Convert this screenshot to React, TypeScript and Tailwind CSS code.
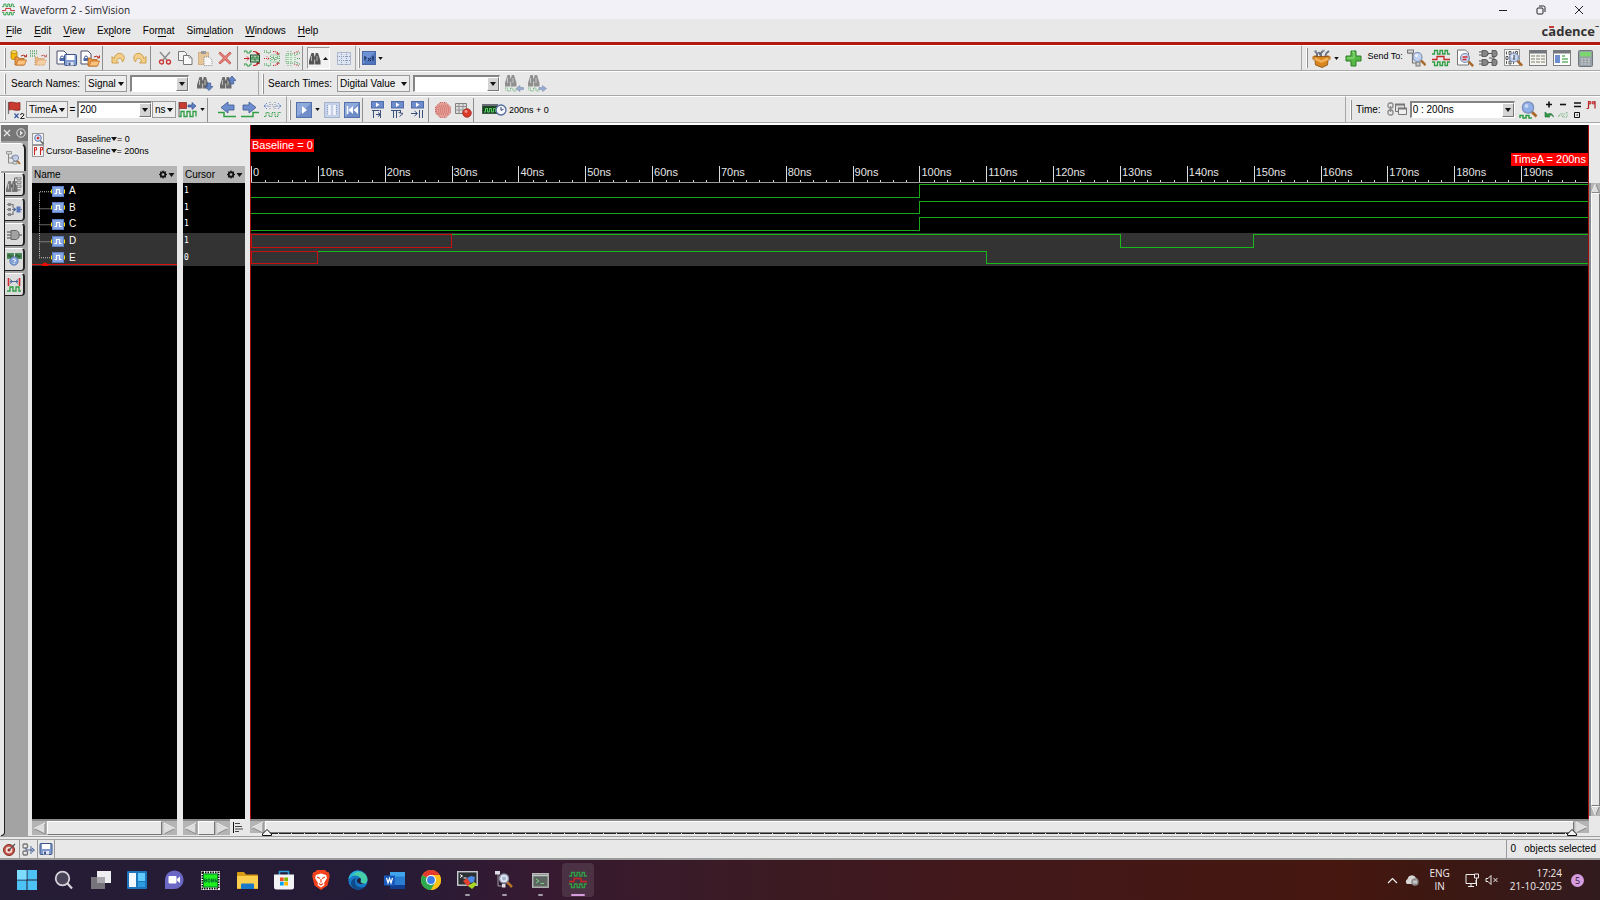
import React from "react";

type P = { children?: React.ReactNode };

/* ---------- drawing helpers ---------- */

function Svg({ w, h, children, className = "" }: { w: number; h: number; children?: React.ReactNode; className?: string }) {
  return (
    <svg width={w} height={h} viewBox={`0 0 ${w} ${h}`} fill="none" aria-hidden="true" className={"block shrink-0 " + className}>
      {children}
    </svg>
  );
}

const Caret = ({ className = "" }: { className?: string }) => (
  <Svg w={6} h={4} className={className}>
    <path d="M0 0h6L3 4z" fill="#111" />
  </Svg>
);

const Waves = ({ w = 18, h = 18 }: { w?: number; h?: number }) => (
  <svg width={w} height={h} viewBox="0 0 18 18" fill="none" strokeWidth="1.3" aria-hidden="true" className="block">
    <path d="M0 5h2.500V1.500h3V5H8V1.500h2.500V5h2.500V1.500h2.500V5H18" stroke="#2f9e44" />
    <path d="M0 10.500h5V7.500h7v3h6" stroke="#c62828" />
    <path d="M0 13h2.500v3.500h3V13H8v3.500h2.500V13h2.500v3.500h2.500V13H18" stroke="#2f9e44" />
  </svg>
);

const Folder = ({ x = 0, y = 0, dash = false }: { x?: number; y?: number; dash?: boolean }) => (
  <g transform={`translate(${x} ${y})`} opacity={dash ? 0.65 : 1}>
    <path d="M0 10V2h3l1 1.500h5V10z" fill="#e79a4b" stroke="#b5651d" strokeWidth=".8" strokeDasharray={dash ? "1 1" : undefined} />
    <path d="M1 10l2-5h8.500L9.500 10z" fill="#fbc37e" stroke="#c26a20" strokeWidth=".8" strokeDasharray={dash ? "1 1" : undefined} />
    <path d="M6 1q3-2 5 .5M11.500-.5v2.300H9" stroke="#b52a1c" strokeWidth="1" />
  </g>
);

const OpenDb = () => (
  <Svg w={18} h={18}>
    <path d="M1 3v6c0 2 6 2 6 0V3" fill="#f2b90f" stroke="#a87d00" strokeWidth=".7" />
    <ellipse cx="4" cy="3" rx="3" ry="1.400" fill="#ffe36b" stroke="#a87d00" strokeWidth=".7" />
    <Folder x={5} y={6} />
  </Svg>
);
const OpenSrc = () => (
  <Svg w={18} h={18}>
    <path d="M0 2h8M0 4.500h8M0 7h5" stroke="#58a566" strokeWidth="1.500" strokeDasharray="1 1" />
    <Folder x={5} y={6} dash />
  </Svg>
);
const Page = ({ x = 0, y = 0 }: { x?: number; y?: number }) => (
  <g transform={`translate(${x} ${y})`}>
    <path d="M0 0h7l3 3v10H0z" fill="#fff" stroke="#4a5068" strokeWidth="1" />
    <path d="M3.500 9V6.500a1.500 1.500 0 013 0V9" stroke="#3a559a" />
    <rect x="2.500" y="7" width="5" height="3" fill="#4a69ad" />
  </g>
);
const Disk = ({ x = 0, y = 0, s = 1 }: { x?: number; y?: number; s?: number }) => (
  <g transform={`translate(${x} ${y}) scale(${s})`}>
    <rect x=".5" y=".5" width="12" height="11" rx="1" fill="#7f9bcd" stroke="#3c5488" />
    <rect x="2.500" y="1" width="8" height="5" fill="#fff" />
    <rect x="3.500" y="8" width="6" height="3.500" fill="#dfe4ee" />
    <rect x="4.500" y="8.500" width="2" height="3" fill="#43598f" />
  </g>
);
const SaveScript = () => (
  <Svg w={21} h={17}>
    <Page x={1} y={1} />
    <Disk x={8} y={4} />
  </Svg>
);
const OpenScript = () => (
  <Svg w={20} h={17}>
    <Page x={1} y={1} />
    <Folder x={8} y={6} />
  </Svg>
);
const Undo = ({ flip = false }: { flip?: boolean }) => (
  <Svg w={16} h={14} className={flip ? "-scale-x-100" : ""}>
    <path d="M1 5.500V12h6.500L5.500 10C7 6.500 10.500 6 11.500 11c4-5 .5-9.500-4.500-8.500Q4 3.500 3 7.500z" fill="#f3cf8b" stroke="#c99a3e" strokeWidth=".9" />
  </Svg>
);
const Cut = () => (
  <Svg w={14} h={14}>
    <path d="M2 1l7 8M12 1L5 9" stroke="#8d8d8d" strokeWidth="1.500" />
    <circle cx="3.500" cy="11" r="2" stroke="#c33" strokeWidth="1.300" />
    <circle cx="10.500" cy="11" r="2" stroke="#c33" strokeWidth="1.300" />
  </Svg>
);
const Copy = () => (
  <Svg w={15} h={14}>
    <path d="M.5.5h6l2 2v7h-8z" fill="#f4f4f4" stroke="#777" />
    <path d="M5.500 4.500h6l2.500 2.500v6.500H5.500z" fill="#fbfbfb" stroke="#777" />
    <path d="M11 4.500V7h3" stroke="#999" />
  </Svg>
);
const Paste = () => (
  <Svg w={15} h={15}>
    <rect x=".5" y="1.500" width="10" height="12" fill="#e6c699" stroke="#b98a4d" strokeDasharray="1 1" />
    <path d="M3 0h5v3H3z" fill="#9a9a9a" />
    <path d="M6 6h5l3 3v5.500H6z" fill="#f6f6f6" stroke="#8c8c8c" strokeDasharray="1 1" />
  </Svg>
);
const Del = () => (
  <Svg w={14} h={14}>
    <path d="M2 1l5 4.500L12 1l1 1.500L8.500 7l4.500 5-1.500 1L7 8.700 2 13l-1-1.500L5.500 7 1 2.500z" fill="#e88179" stroke="#c04a42" strokeWidth=".8" />
  </Svg>
);
const WaveBox = ({ kind }: { kind: number }) => (
  <Svg w={17} h={17}>
    {kind < 2 ? (
      <g>
        <path d="M0 3V1h3v2h3V1h2M0 16v-2h3v2h3v-2h2" stroke="#2f9e44" strokeDasharray={kind ? "1 1" : undefined} />
        <path d="M9 1.500q5 0 5 3M9 15.500q5 0 5-3" stroke="#c62828" strokeWidth="1.200" strokeDasharray={kind ? "1 1" : undefined} />
        <path d="M12 3h4l-2 3zM12 14h4l-2-3z" fill="#b12020" opacity={kind ? 0.6 : 1} />
        <rect x="6.500" y="5" width="9" height="7" fill={kind ? "#dff0e0" : "#a9cfae"} stroke={kind ? "#6aa978" : "#1d4d2a"} strokeDasharray={kind ? "1 1" : undefined} />
        <path d="M8 10V7h2v3h2V7h2v3" stroke="#2f7a3e" strokeDasharray={kind ? "1 1" : undefined} />
        <path d="M0 8.500h5M3 6.500l2 2-2 2" stroke="#c62828" strokeDasharray={kind ? "1 1" : undefined} />
      </g>
    ) : (
      <g>
        <path d="M2 4h9v9H2z" fill="#dff0e0" stroke="#6aa978" strokeDasharray="1 1" />
        <path d="M4 1v15M7 1v15" stroke="#6aa978" strokeDasharray="1 1" />
        <path d="M10 3l5-2M10 14l5 2" stroke="#c62828" strokeDasharray="1 1" />
        <path d="M13 5V3h3M13 8.500h4M13 12v2h3" stroke="#2f9e44" strokeDasharray="1 1" />
      </g>
    )}
  </Svg>
);
const Bino = ({ x = 0, y = 0, c = "#555" }: { x?: number; y?: number; c?: string }) => (
  <g transform={`translate(${x} ${y})`}>
    <path d="M2.500 0h2.300l.6 3v8.500H0V8z" fill={c} />
    <path d="M9 0H6.700l-.6 3v8.500h5.400V8z" fill={c} />
    <path d="M5 3.500h1.500v3H5z" fill="#222" opacity=".6" />
    <path d="M2.500 3v5M8 3v5" stroke="#ddd" opacity=".7" />
  </g>
);
const BinoIcon = () => (
  <Svg w={12} h={13}>
    <Bino y={1} />
  </Svg>
);
const BinoArrow = ({ up = false }: { up?: boolean }) => (
  <Svg w={16} h={15}>
    <Bino y={1} c="#6b6b6b" />
    {up ? (
      <path d="M12 0l4 4.500h-2.300V8h-3.400V4.500H8z" fill="#6484c4" stroke="#3b568f" strokeWidth=".7" />
    ) : (
      <path d="M12 14.500l4-4h-2.300V7h-3.400v3.500H8z" fill="#6484c4" stroke="#3b568f" strokeWidth=".7" />
    )}
  </Svg>
);
const BinoWave = ({ left = false }: { left?: boolean }) => (
  <Svg w={19} h={17}>
    <g opacity=".6">
      <Bino />
      <path d="M0 16v-3h2.500v3h3v-3h2.500v3h3v-3" stroke="#2f9e44" strokeDasharray="1 .5" />
      <path d={left ? "M11 13.500l4-3v2h3.500v2H15v2z" : "M18.500 13.500l-4-3v2H11v2h3.500v2z"} fill="#6484c4" stroke="#3b568f" strokeWidth=".6" />
    </g>
  </Svg>
);
const Select = () => (
  <Svg w={16} h={15}>
    <rect x="1.500" y="1.500" width="13" height="12" fill="#dde4f2" stroke="#7d8cb3" strokeDasharray="1 1" />
    <path d="M1 5.500h14M1 9.500h14M5.500 1v13M10.500 1v13" stroke="#8b98b8" strokeDasharray="1 1" />
  </Svg>
);
const TxtBtn = () => (
  <Svg w={14} h={14}>
    <rect x=".5" y=".5" width="13" height="13" fill="#6d92d6" stroke="#4b68a5" />
    <path d="M1 13L13 1v12z" fill="#4f76bf" />
    <path d="M3 10V5M2 7h3M6 7l3 3M9 7l-3 3M11 10V5M10 7h2" stroke="#16264f" />
  </Svg>
);
const FlagX = () => (
  <Svg w={18} h={18}>
    <path d="M1.500 1v12" stroke="#777" strokeWidth="1.300" />
    <path d="M2 1.500c4-1.500 6 1.500 11 0v7.500c-5 1.500-7-1.500-11 0z" fill="#c93a30" stroke="#80201a" strokeWidth=".7" />
    <path d="M7.500 12.500l4 4.500M11.500 12.500l-4 4.500" stroke="#3b5aa0" strokeWidth="1.200" />
    <path d="M13.500 14q0-1.500 1.700-1.500T17 14L13.500 17.500H17.500" stroke="#111" strokeWidth=".9" />
  </Svg>
);
const FlagWave = () => (
  <Svg w={20} h={17}>
    <path d="M1 1v15" stroke="#666" />
    <path d="M1.500 1.500h7v6h-7z" fill="#c93a30" stroke="#80201a" strokeWidth=".7" />
    <path d="M10 4h4V1.500l4 3.500-4 3.500V6h-4z" fill="#5b7fc2" stroke="#344f8c" strokeWidth=".7" />
    <path d="M1 15.500h2v-5h3v5h3v-5h3v5h3v-5h3v5" stroke="#2f9e44" strokeWidth="1.300" />
  </Svg>
);
const EdgeArrow = ({ left = false }: { left?: boolean }) => (
  <Svg w={19} h={17} className={left ? "-scale-x-100" : ""}>
    <path d="M2 4h6V1l7 5.500L8 12V9H2z" fill="#6d8fd0" stroke="#3b568f" strokeWidth=".8" />
    <path d="M0 15.500h12v-4h6" stroke="#2f9e44" strokeWidth="1.500" />
  </Svg>
);
const WaveEdit = () => (
  <Svg w={19} h={17}>
    <path d="M1 5h5M13 5h5M1 5l3-3M1 5l3 3M18 5l-3-3M18 5l-3 3" stroke="#6d8fd0" strokeDasharray="2 .7" />
    <path d="M7 1v8M12 1v8M9 3l2 4" stroke="#7b869e" strokeDasharray="1 1" />
    <path d="M1 15.500h2v-4h3v4h3v-4h3v4h3v-4h3" stroke="#2f9e44" strokeDasharray="1.500 .7" />
  </Svg>
);
const Play = () => (
  <Svg w={16} h={16}>
    <rect x=".5" y=".5" width="15" height="15" fill="#8ea9dc" stroke="#5470ab" />
    <path d="M1 15L15 1v14z" fill="#6f8dc8" />
    <path d="M6 4l5 4-5 4z" fill="#fff" />
  </Svg>
);
const Pause = () => (
  <Svg w={16} h={16}>
    <rect x=".5" y=".5" width="15" height="15" fill="#c6d1e8" stroke="#7088b8" strokeDasharray="1 1" />
    <path d="M5.500 3v10M10.500 3v10" stroke="#f4f6fb" strokeWidth="2.500" />
    <path d="M3.500 3v10M12.500 3v10" stroke="#8fa3cc" strokeDasharray="1 1" />
  </Svg>
);
const Rewind = () => (
  <Svg w={16} h={16}>
    <rect x=".5" y=".5" width="15" height="15" fill="#8ea9dc" stroke="#5470ab" />
    <path d="M1 15L15 1v14z" fill="#6f8dc8" />
    <path d="M3.500 4v8" stroke="#fff" strokeWidth="1.500" />
    <path d="M9 4v8L4.500 8zM14 4v8L9.500 8z" fill="#fff" />
  </Svg>
);
const Step = ({ kind }: { kind: number }) => (
  <Svg w={15} h={17}>
    <rect x="1.500" y=".5" width="12" height="6.500" fill="#6d8ccb" stroke="#4f6ba8" />
    <path d="M6 1.500l3.500 2.200L6 6z" fill="#fff" />
    {kind === 0 && <path d="M2 9.500h7.500M3.500 9.500V17M10.500 9v8M6 13.500h4M8 11.500l2.500 2-2.500 2" stroke="#3c507c" />}
    {kind === 1 && <path d="M1 9.500h9.500M3.500 9.500V17M6.500 9.500V17M10.500 9v3M8.500 11.500l4.500 1-3.500 3" stroke="#3c507c" />}
    {kind === 2 && <path d="M1 12.500h6M4.500 10l3 2.500-3 2.500M9.500 9v8M12.500 9v8" stroke="#3c507c" />}
  </Svg>
);
const Stop = () => (
  <Svg w={16} h={16}>
    <path d="M5 .5h6L15.500 5v6L11 15.500H5L.5 11V5z" fill="#e39b95" stroke="#c4605a" strokeDasharray="1 1" />
    <path d="M2 4h12M1 6h14M1 8h14M1 10h14M2 12h12" stroke="#cc6a63" strokeDasharray="1 1" />
  </Svg>
);
const BreakTable = () => (
  <Svg w={17} h={16}>
    <path d="M.5 1.500h11v10H.5z" fill="#dcdcdc" stroke="#808080" />
    <path d="M.5 4.500h11M.5 8h11M4 1.500v10M8 1.500v10" stroke="#909090" />
    <circle cx="12" cy="11" r="4.300" fill="#d93a2c" stroke="#9a2118" strokeWidth=".7" />
    <circle cx="11" cy="9.500" r="1.400" fill="#f29a8f" />
  </Svg>
);
const SimClock = () => (
  <Svg w={25} h={14}>
    <rect x=".5" y="1.500" width="15" height="9" fill="#1e4426" stroke="#3e5a45" />
    <path d="M0 2h16" stroke="#6a6f7a" strokeWidth="2" />
    <path d="M2 9h1.500V5.500h2V9h2V5.500h2V9h2V5.500h2V9" stroke="#56d65f" />
    <circle cx="19" cy="7" r="5" fill="#f4f6fb" stroke="#526a9e" strokeWidth="1.300" />
    <path d="M19 4v3.300l2.500-1" stroke="#2b3c66" />
  </Svg>
);
const Toolbox = () => (
  <Svg w={20} h={19}>
    <path d="M5 8V4.500L3 2M9 8V4l2.500-2.500M13 8l1.500-4L17 2M6.500 3l2 3" stroke="#6b7480" strokeWidth="2" />
    <path d="M2 3q1-2 3-1M10 1.500h3" stroke="#9aa3ad" strokeWidth="1.300" />
    <path d="M1 7l3-1v3L1 11.500l-1-3zM18 7l-3-1v3l3 2.500 1-3z" fill="#c98a3e" />
    <path d="M2.500 7.500h14l-1 8.500L10 18.500 3.500 16z" fill="#d8851f" stroke="#8a4d0a" strokeWidth=".8" />
    <path d="M2.500 8l7 3 7-3v3l-7 3-7-3z" fill="#f2ae56" />
  </Svg>
);
const Plus = () => (
  <Svg w={17} h={17}>
    <path d="M6 1h5v5h5v5h-5v5H6v-5H1V6h5z" fill="#56b947" stroke="#2a7d24" />
    <path d="M7 2h2v6H2" stroke="#98e08a" />
  </Svg>
);
const Mag = ({ x = 0, y = 0, r = 4.5 }: { x?: number; y?: number; r?: number }) => (
  <g transform={`translate(${x} ${y})`}>
    <path d={`M${r * 0.7} ${r * 0.7}l5 5`} stroke="#a8692a" strokeWidth="2.600" />
    <circle cx="0" cy="0" r={r} fill="#b9cdf0" fillOpacity=".85" stroke="#8291b3" strokeWidth="1.200" />
    <circle cx={-r * 0.25} cy={-r * 0.3} r={r * 0.35} fill="#fff" opacity=".7" />
  </g>
);
const Browser = () => (
  <Svg w={19} h={19}>
    <path d="M1.500 1v3h4v10h5M5.500 8h4" stroke="#777" strokeWidth="1.200" />
    <rect x=".5" y="1" width="6" height="3" fill="#d8d8d8" stroke="#777" />
    <rect x="9" y="13" width="4" height="4" fill="#ccc" stroke="#777" />
    <Mag x={10.500} y={8} />
  </Svg>
);
const TabBrowser = () => (
  <Svg w={15} h={14}>
    <path d="M2.500 3v9h6M2.500 7h4" stroke="#888" />
    <path d="M.5.500h5V3h-5zM6 5h4v2.500H6zM7 10.500h4V13H7z" fill="#dcdcdc" stroke="#888" strokeWidth=".8" />
    <path d="M11 9.500l3 3.500" stroke="#a8692a" strokeWidth="1.800" />
    <circle cx="9.500" cy="7" r="3" fill="#c5d3ec" fillOpacity=".8" stroke="#7d8bad" />
  </Svg>
);
const SrcBrowser = () => (
  <Svg w={19} h={19}>
    <path d="M1.500 1h8l3 3v12h-11z" fill="#fbfbfb" stroke="#777" />
    <Mag x={9} y={9} />
    <path d="M6.500 8h5M6.500 10.500h4" stroke="#d22a2a" strokeWidth="1.500" />
  </Svg>
);
const Schematic = () => (
  <Svg w={20} h={18}>
    <path d="M0 3h6M0 6h6M0 12h6M0 15h6M8 4.500h6M15 5v8M8 13.500h6M10 9h5" stroke="#555" />
    <path d="M3 1.500h4l2 1.500v3L7 7.500H3zM13 1.500h4l1 1.500v3l-1 1.500h-4zM3 10.500h4l2 1.500v3l-2 1.500H3zM13 10.500h4l1 1.500v3l-1 1.500h-4z" fill="#868686" stroke="#4d4d4d" strokeWidth=".8" />
  </Svg>
);
const MemView = () => (
  <Svg w={20} h={19}>
    <rect x=".5" y=".5" width="15" height="16" fill="#f6f6f6" stroke="#999" />
    <path d="M2.500 2.500v3M5 2.500h2v3H5zM9.500 2.500v3M11.500 2.500h2v3h-2zM2 7.500h2v3H2zM6.500 7.500v3M2.500 12v3M5 12h2v3H5zM9.500 12v3" stroke="#333" strokeWidth=".8" />
    <Mag x={10} y={8.500} r={4.500} />
    <path d="M10 6v5" stroke="#333" />
  </Svg>
);
const TableIcon = () => (
  <Svg w={18} h={16}>
    <rect x=".5" y=".5" width="17" height="15" fill="#f3f3f0" stroke="#7d7d7d" />
    <path d="M1 2h16" stroke="#73767c" strokeWidth="3" />
    <path d="M2 6h4M7 6h4M12 6h4M2 9h4M7 9h4M12 9h4M2 12h4M7 12h4M12 12h4" stroke="#a5a595" strokeWidth="1.500" />
  </Svg>
);
const PropsIcon = () => (
  <Svg w={18} h={16}>
    <rect x=".5" y=".5" width="17" height="15" fill="#fff" stroke="#7d7d7d" />
    <path d="M1 2h16" stroke="#73767c" strokeWidth="3" />
    <rect x="2" y="5" width="5" height="8" fill="#6d8fd0" />
    <path d="M9 6h3M9 9h6M9 12h6" stroke="#68b36a" strokeWidth="1.600" />
  </Svg>
);
const Calc = () => (
  <Svg w={15} h={17}>
    <rect x=".5" y=".5" width="14" height="16" rx="1" fill="#97a0a6" stroke="#6f777d" />
    <rect x="2" y="2" width="11" height="4.500" fill="#7bd66e" />
    <path d="M3 9h9M3 11.500h9M3 14h9" stroke="#c2c8cc" strokeWidth="1.400" strokeDasharray="2.200 1.200" />
  </Svg>
);
const LinkWin = () => (
  <Svg w={20} h={15}>
    <rect x="1" y="1" width="5" height="5" rx="2" stroke="#888" strokeWidth="1.300" />
    <rect x="1" y="8" width="5" height="5" rx="2" stroke="#888" strokeWidth="1.300" />
    <path d="M3.500 4v6" stroke="#888" strokeWidth="1.300" />
    <path d="M8.500 2.500h9v7h-9z" fill="#ddd" stroke="#777" />
    <path d="M8 2.500h10" stroke="#777" strokeWidth="2" />
    <path d="M11.500 6.500h8v6h-8z" fill="#eee" stroke="#777" />
    <path d="M11 6.500h9" stroke="#777" strokeWidth="2" />
  </Svg>
);
const ZoomWave = () => (
  <Svg w={19} h={18}>
    <path d="M1 17v-2.500h3V17h3v-2.500h3V17h3" stroke="#2f9e44" strokeWidth="1.500" />
    <path d="M12.500 10.500l5 5" stroke="#a8692a" strokeWidth="2.800" />
    <circle cx="9" cy="6.500" r="5.700" fill="#8fafe8" stroke="#7d8fb8" strokeWidth="1.200" />
    <circle cx="7.500" cy="5" r="2" fill="#fff" opacity=".5" />
  </Svg>
);
const Cursors = () => (
  <Svg w={10} h={9}>
    <path d="M2.500 8.500V1M9 8.500V1" stroke="#b32020" strokeWidth="1.200" />
    <path d="M2.500 1.500h2.500V4H2.500zM8.500 1.500h-2V4h2z" fill="#e26a6a" stroke="#b32020" strokeWidth=".7" />
    <path d="M.5 8.500h2" stroke="#b32020" />
  </Svg>
);
const Gear = () => (
  <Svg w={16} h={9}>
    <circle cx="4" cy="4.500" r="2.400" stroke="#111" strokeWidth="1.700" />
    <path d="M4 .5v8M0 4.500h8M1.200 1.700l5.600 5.600M6.800 1.700L1.200 7.300" stroke="#111" strokeWidth="1.100" />
    <circle cx="4" cy="4.500" r="1.300" fill="#b5b5b5" />
    <path d="M9.500 3h6l-3 4z" fill="#111" />
  </Svg>
);
const SigIcon = () => (
  <Svg w={14} h={11}>
    <path d="M0 3.500h3v4H0zM11 3.500h3v4h-3z" fill="#ffe100" />
    <rect x="1.500" y=".5" width="11" height="10" fill="#86a6e4" stroke="#5f7fc4" />
    <path d="M3.500 7.500h2v-4h3v4h2" stroke="#fff" strokeWidth="1.200" />
  </Svg>
);

/* ---------- controls ---------- */

const Sep = () => <span className="h-6 w-px shrink-0 border-l border-[#8f8f8f] bg-white" />;
const Handle = () => <span className="h-5 w-0.5 shrink-0 border-r border-[#8f8f8f] bg-white" />;

const Btn = ({ label, children, wide = false }: P & { label: string; wide?: boolean }) => (
  <button aria-label={label} className={"flex h-5 shrink-0 items-center justify-center " + (wide ? "w-6" : "w-5")}>
    {children}
  </button>
);

const Drop = ({ label, value, className }: { label: string; value: string; className: string }) => (
  <span className={"relative flex h-[17px] shrink-0 items-center border border-[#9a9a9a] bg-[#ededed] " + className}>
    <select aria-label={label} defaultValue={value} className="h-full w-full appearance-none bg-transparent pl-0.5 text-[10px] leading-4 outline-none">
      <option>{value}</option>
    </select>
    <Caret className="pointer-events-none absolute right-0.5" />
  </span>
);

const Combo = ({ label, value = "", className }: { label: string; value?: string; className: string }) => (
  <span className={"flex h-[17px] shrink-0 border border-t-2 border-l-2 border-[#858585] border-r-white border-b-white bg-white " + className}>
    <input aria-label={label} defaultValue={value} className="w-0 min-w-0 flex-1 bg-transparent pl-px text-[10px] leading-[14px] outline-none" />
    <button aria-label={`${label} list`} className="flex w-3 items-center justify-center border border-t-white border-r-[#777] border-b-[#777] border-l-white bg-[#d4d4d4]">
      <Caret />
    </button>
  </span>
);

const bar = "flex shrink-0 items-center border-b border-[#a8a8a8] border-t border-t-white px-1";

/* ---------- toolbars ---------- */

const menus: [string, string, string][] = [
  ["", "F", "ile"],
  ["", "E", "dit"],
  ["", "V", "iew"],
  ["Ex", "p", "lore"],
  ["For", "m", "at"],
  ["Sim", "u", "lation"],
  ["", "W", "indows"],
  ["", "H", "elp"],
];

function TitleBar() {
  return (
    <header className="flex h-[19px] shrink-0 items-center bg-[#f3f1f8] font-['Open_Sans','Noto_Sans',sans-serif]">
      <span className="ml-0.5 flex w-[18px]">
        <Waves w={13} h={13} />
      </span>
      <h1 className="text-[10px] leading-4 text-[#222]">Waveform 2 - SimVision</h1>
      <div className="ml-auto flex items-center pr-0.5">
        <button aria-label="Minimize" className="flex w-[38px] justify-center">
          <Svg w={10} h={10}><path d="M1 5.500h8" stroke="#222" /></Svg>
        </button>
        <button aria-label="Restore" className="flex w-[38px] justify-center">
          <Svg w={10} h={10}><rect x="1" y="3" width="6" height="6" rx="1" stroke="#222" /><path d="M3 1h4.500A1.500 1.500 0 019 2.500V7" stroke="#222" /></Svg>
        </button>
        <button aria-label="Close" className="flex w-[38px] justify-center">
          <Svg w={10} h={10}><path d="M1 1l8 8M9 1L1 9" stroke="#222" /></Svg>
        </button>
      </div>
    </header>
  );
}

function MenuBar() {
  return (
    <nav className="flex h-[26px] shrink-0 items-center justify-between border-b-3 border-[#b51a10] bg-[#e9e8e8] pr-px pl-1.5">
      <ul className="flex gap-3">
        {menus.map(([a, b, c]) => (
          <li key={a + b + c} className="flex">
            <button className="text-[10px] leading-5">
              {a}
              <span className="underline underline-offset-2">{b}</span>
              {c}
            </button>
          </li>
        ))}
      </ul>
      <span className="flex items-start font-['Open_Sans',sans-serif] text-[13px] leading-5 font-bold text-[#333]">
        c<span className="relative">a<i className="absolute top-[5px] left-px h-0.5 w-[5px] bg-[#c83a3a]" /></span>dence
        <span className="text-[7px] leading-3">~</span>
      </span>
    </nav>
  );
}

function MainTools() {
  return (
    <div className="flex h-[26px] shrink-0">
      <div className={bar + " w-[355px] gap-0"}>
        <Handle />
        <div className="ml-[3px] flex">
          <Btn label="Open database"><OpenDb /></Btn>
          <Btn label="Open source"><OpenSrc /></Btn>
        </div>
        <Sep />
        <div className="ml-1 flex">
          <Btn label="Save script" wide><SaveScript /></Btn>
          <Btn label="Open script" wide><OpenScript /></Btn>
        </div>
        <Sep />
        <div className="mr-px ml-1.5 flex">
          <Btn label="Undo"><Undo /></Btn>
          <Btn label="Redo"><Undo flip /></Btn>
        </div>
        <Sep />
        <div className="mr-0.5 ml-1 flex">
          <Btn label="Cut"><Cut /></Btn>
          <Btn label="Copy"><Copy /></Btn>
          <Btn label="Paste"><Paste /></Btn>
          <Btn label="Delete"><Del /></Btn>
        </div>
        <Sep />
        <div className="ml-1 flex">
          <Btn label="Expand"><WaveBox kind={0} /></Btn>
          <Btn label="Replace"><WaveBox kind={1} /></Btn>
          <Btn label="Collapse"><WaveBox kind={2} /></Btn>
        </div>
        <Sep />
        <button aria-label="Find" className="mr-1 ml-1 flex h-[22px] w-[23px] shrink-0 items-center justify-center gap-0.5 border border-[#999] border-r-white border-b-white bg-[#f1f1f1]">
          <BinoIcon />
          <Svg w={5} h={3}><path d="M0 3h5L2.500 0z" fill="#111" /></Svg>
        </button>
        <Btn label="Selection mode"><Select /></Btn>
      </div>
      <div className={bar + " flex-1 border-l border-l-[#a8a8a8] pl-0.5"}>
        <Handle />
        <button aria-label="Text view" className="flex items-center gap-0.5 pl-0.5">
          <TxtBtn />
          <Caret className="h-[3px] w-[5px]" />
        </button>
      </div>
      <div className={bar + " w-[299px] justify-between border-l border-l-[#a8a8a8]"}>
        <Handle />
        <button aria-label="Tools" className="flex items-center gap-0.5"><Toolbox /><Caret className="h-[3px] w-[5px]" /></button>
        <Btn label="Add"><Plus /></Btn>
        <span className="self-start pt-0.5 text-[9px] leading-4 whitespace-nowrap">Send To:</span>
        <Btn label="Design browser"><Browser /></Btn>
        <Btn label="Waveform"><Waves /></Btn>
        <Btn label="Source browser"><SrcBrowser /></Btn>
        <Btn label="Schematic"><Schematic /></Btn>
        <Btn label="Memory viewer"><MemView /></Btn>
        <Btn label="Watch window"><TableIcon /></Btn>
        <Btn label="Register window"><PropsIcon /></Btn>
        <Btn label="Calculator"><Calc /></Btn>
      </div>
    </div>
  );
}

function SearchTools() {
  return (
    <div className="flex h-[25px] shrink-0">
      <div className={bar + " w-[258px]"}>
        <Handle />
        <span className="w-[79px] pl-[5px] text-[10px] leading-4 whitespace-nowrap">Search Names:</span>
        <Drop label="Search names type" value="Signal" className="w-[42px]" />
        <Combo label="Search names" className="ml-[3px] w-[59px]" />
        <div className="ml-1.5 flex gap-[3px]">
          <Btn label="Find next"><BinoArrow /></Btn>
          <Btn label="Find previous"><BinoArrow up /></Btn>
        </div>
      </div>
      <div className={bar + " flex-1 border-l border-l-[#a8a8a8] pl-[3px]"}>
        <Handle />
        <span className="w-[73px] pl-1 text-[10px] leading-4 whitespace-nowrap">Search Times:</span>
        <Drop label="Search times type" value="Digital Value" className="w-[73px]" />
        <Combo label="Search times" className="ml-[3px] w-[87px]" />
        <div className="ml-1 flex gap-[3px]">
          <Btn label="Previous time"><BinoWave left /></Btn>
          <Btn label="Next time"><BinoWave /></Btn>
        </div>
      </div>
    </div>
  );
}

function TimeTools() {
  return (
    <div className="flex h-[27px] shrink-0">
      <div className={bar + " w-[286px]"}>
        <Handle />
        <Btn label="Set cursor"><FlagX /></Btn>
        <Drop label="Cursor" value="TimeA" className="w-[42px]" />
        <span className="w-3 text-center text-[10px] leading-4">=</span>
        <Combo label="Cursor time" value="200" className="w-[75px]" />
        <Drop label="Unit" value="ns" className="w-6" />
        <button aria-label="Go to marker" className="mr-0.5 ml-0.5 flex items-center gap-0.5"><FlagWave /><Caret className="h-[3px] w-[5px]" /></button>
        <Sep />
        <div className="ml-1.5 flex">
          <Btn label="Previous edge" wide><EdgeArrow left /></Btn>
          <Btn label="Next edge" wide><EdgeArrow /></Btn>
          <Btn label="Edit edge"><WaveEdit /></Btn>
        </div>
      </div>
      <div className={bar + " flex-1 border-l border-l-[#a8a8a8] pl-0.5"}>
        <Handle />
        <button aria-label="Run" className="mr-0.5 ml-[5px] flex items-center gap-[3px]"><Play /><Caret className="h-[3px] w-[5px]" /></button>
        <Btn label="Pause"><Pause /></Btn>
        <Btn label="Rewind"><Rewind /></Btn>
        <Sep />
        <div className="mr-px ml-1 flex">
          <Btn label="Step"><Step kind={0} /></Btn>
          <Btn label="Step over"><Step kind={1} /></Btn>
          <Btn label="Step out"><Step kind={2} /></Btn>
        </div>
        <Sep />
        <div className="ml-1 flex">
          <Btn label="Stop"><Stop /></Btn>
          <Btn label="Breakpoints"><BreakTable /></Btn>
        </div>
        <Sep />
        <span className="ml-2 flex items-center gap-0.5 text-[9px] leading-4 whitespace-nowrap">
          <SimClock /> 200ns + 0
        </span>
      </div>
      <div className={bar + " w-[255px] border-l border-l-[#a8a8a8] pr-1"}>
        <Handle />
        <span className="ml-1 text-[10px] leading-4">Time:</span>
        <button aria-label="Link windows" className="mr-[3px] ml-1.5"><LinkWin /></button>
        <Combo label="Time range" value="0 : 200ns" className="w-[105px]" />
        <button aria-label="Zoom" className="ml-1"><ZoomWave /></button>
        <div className="ml-auto grid grid-cols-4 gap-x-1 gap-y-px">
          <button aria-label="Zoom in"><Svg w={10} h={9}><path d="M2 4.500h6M5 1.500v6" stroke="#111" strokeWidth="1.600" /></Svg></button>
          <button aria-label="Zoom out"><Svg w={10} h={9}><path d="M2 4.500h6" stroke="#111" strokeWidth="1.600" /></Svg></button>
          <button aria-label="Zoom fit"><Svg w={10} h={9}><path d="M2 3h7M2 6.500h7" stroke="#111" strokeWidth="1.600" /></Svg></button>
          <button aria-label="Zoom cursors"><Cursors /></button>
          <button aria-label="Zoom back"><Svg w={10} h={9}><path d="M1 2v5h5L4.500 5.500Q8 4 9.500 7 8.500 2 3.500 4z" fill="#2f9e44" stroke="#1d6b2d" strokeWidth=".6" /></Svg></button>
          <button aria-label="Zoom forward"><Svg w={10} h={9}><path d="M9 2v5H4l1.500-1.500Q2 4 .5 7 1.500 2 6.500 4z" stroke="#5aa968" strokeWidth=".8" strokeDasharray="1 .7" /></Svg></button>
          <button aria-label="Zoom window"><Svg w={10} h={9}><path d="M2.500 2.500h5v5h-5z" stroke="#111" /><path d="M4.500 4.500h1.500v1H4.500z" fill="#111" /></Svg></button>
        </div>
      </div>
    </div>
  );
}

/* ---------- side tabs ---------- */

const tabIcons = [
  <TabBrowser key="b" />,
  <Svg key="f" w={16} h={15}><Bino y={4} c="#777" /><path d="M8.500 1h6M8.500 5h6M8.500 9h6M8.500 1v12h6" stroke="#666" /><path d="M11 0h4v2.500h-4zM11 4h4v2.500h-4zM11 8h4v2.500h-4z" fill="#c9c9c9" stroke="#666" strokeWidth=".6" /></Svg>,
  <Svg key="m" w={15} h={13}><path d="M0 1.500h3M0 6.500h3M0 11.500h3M3 1.500h3v3M3 11.500h3v-3M5 6.500h4" stroke="#777" strokeWidth="1.200" /><path d="M1 0h3v3H1zM1 5h3v3H1zM1 10h3v3H1z" fill="#888" /><path d="M6.500 4l3 2.500-3 2.500z" fill="#4e6599" /><path d="M9.500 3.500h4v6h-4z" fill="#5b79b8" /><path d="M13.500 6.500h1.500" stroke="#4e6599" /></Svg>,
  <Svg key="g" w={15} h={12}><path d="M0 3h4M0 6h4M0 9h4M12 6h3" stroke="#777" strokeWidth="1.300" /><path d="M4 1.500h5.500l2.500 2v5l-2.500 2H4z" fill="#a2a2a2" stroke="#666" /></Svg>,
  <Svg key="q" w={15} h={13}><rect x="0" y="0" width="7" height="6" fill="#4d8a59" /><rect x="8" y="0" width="7" height="6" fill="#4d8a59" /><path d="M1 4V2h2v2h2V2M9 4V2h2v2h2V2" stroke="#2b5c36" /><circle cx="7" cy="8" r="4.200" fill="#86a3d8" stroke="#5671ab" strokeWidth=".8" /><path d="M5.700 6.700q1.300-1.500 2.500 0T7 9M7 10v1" stroke="#fff" /></Svg>,
  <Svg key="w" w={14} h={14}><path d="M1.500 0v8M12.500 0v8" stroke="#d22a2a" strokeWidth="1.600" /><path d="M3 3.500h8M3 1.500l2.500 2-2.500 2M11 1.500l-2.500 2 2.500 2" stroke="#4e6599" /><path d="M0 13h3V9h3v4h3V9h3v4h2" stroke="#2f9e44" strokeWidth="1.400" /></Svg>,
];
const tabNames = ["Design browser", "Find", "Expressions", "Modules", "Queries", "Markers"];

function SideTabs() {
  return (
    <aside className="ml-px flex w-[27px] shrink-0 flex-col bg-[#a3a3a3]">
      <div className="flex h-4 items-center justify-around bg-[#777]">
        <button aria-label="Close panel"><Svg w={8} h={8}><path d="M1 1l6 6M7 1L1 7" stroke="#e6e6e6" strokeWidth="1.300" /></Svg></button>
        <button aria-label="Panel options"><Svg w={10} h={10}><circle cx="5" cy="5" r="4.200" stroke="#e0e0e0" /><path d="M4 2.500v5L7 5z" fill="#e6e6e6" /></Svg></button>
      </div>
      <div className="flex flex-col items-start gap-0.5 pt-0.5">
        {tabIcons.map((ic, i) => (
          <button
            key={tabNames[i]}
            aria-label={tabNames[i]}
            className={
              i === 0
                ? "flex h-7 w-[25px] items-center justify-center rounded-tr-md border-t border-r-2 border-t-white border-r-[#222] bg-[#e8e8e8] pl-0.5"
                : "ml-1 flex h-[23px] w-5 items-center justify-center rounded-r border-t border-r-2 border-b border-t-white border-r-[#222] border-b-[#222] bg-[#dcdcdc]"
            }
          >
            {ic}
          </button>
        ))}
      </div>
      <div className="-mt-[123px] w-1 flex-1 rounded-br border-r border-b border-[#222] bg-[#e8e8e8]" />
    </aside>
  );
}

/* ---------- signals ---------- */

const signals = [
  { name: "A", value: "1" },
  { name: "B", value: "1" },
  { name: "C", value: "1" },
  { name: "D", value: "1", sel: true },
  { name: "E", value: "0", sel: true },
];

const ArrowBtn = ({ dir }: { dir: "left" | "right" | "up" | "down" }) => (
  <button aria-label={`Scroll ${dir}`} className="flex shrink-0 items-center justify-center">
    {dir === "left" && <Svg w={13} h={13}><path d="M12 1v11L1 6.500z" fill="#dedede" stroke="#888" /><path d="M12 1L1 6.500" stroke="#fff" /></Svg>}
    {dir === "right" && <Svg w={13} h={13}><path d="M1 1v11l11-5.500z" fill="#dedede" stroke="#888" /><path d="M1 12V1l11 5.500" stroke="#fff" /></Svg>}
    {dir === "up" && <Svg w={9} h={10}><path d="M.5 9.500h8L4.500.5z" fill="#dedede" stroke="#888" /><path d="M.5 9.500l4-9" stroke="#fff" /></Svg>}
    {dir === "down" && <Svg w={9} h={10}><path d="M.5.5h8l-4 9z" fill="#dedede" stroke="#888" /><path d="M8.500.5H.5l4 9" stroke="#fff" /></Svg>}
  </button>
);

const HScroll = ({ className = "" }: { className?: string }) => (
  <div className={"flex items-center gap-px border-t-2 border-[#8a8a8a] bg-[#b4b4b4] px-px " + className}>
    <ArrowBtn dir="left" />
    <div className="h-full flex-1 border border-t-white border-r-[#777] border-b-[#777] border-l-white bg-[#e8e8e8]" />
    <ArrowBtn dir="right" />
  </div>
);

const ColHead = ({ title }: { title: string }) => (
  <div className="flex h-[17px] shrink-0 items-center justify-between bg-[#b5b5b5] px-0.5 text-[10px] leading-4">
    {title}
    <button aria-label={`${title} options`}><Gear /></button>
  </div>
);

function Names() {
  return (
    <div className="flex min-h-0 w-[145px] flex-1 flex-col bg-black">
      <ColHead title="Name" />
      <ul className="grid h-[83px] grid-rows-5 text-[10px] leading-4 text-white">
        {signals.map((s, i) => (
          <li key={s.name} className={"flex items-center " + (s.sel ? "bg-[#333]" : "")}>
            <svg width="19" height="100%" viewBox="0 0 19 16" preserveAspectRatio="none" className="shrink-0" fill="none" aria-hidden="true">
              <path d={i === 0 ? "M7.500 16V8.500H19" : i === 4 ? "M7.500 0V8.500H19" : "M7.500 0V16M7.500 8.500H19"} stroke="#c8c8c8" strokeDasharray="1 1" />
            </svg>
            <SigIcon />
            <span className="pl-1">{s.name}</span>
          </li>
        ))}
      </ul>
      <svg width="100%" height="4" className="-mt-1 block" aria-hidden="true">
        <path d="M10 4q0-3 3-3.500Q16 1 17 4z" fill="#f00" />
        <path d="M0 2.500H200" stroke="#e01010" />
      </svg>
    </div>
  );
}

function Values() {
  return (
    <div className="flex min-h-0 flex-1 flex-col bg-black">
      <ColHead title="Cursor" />
      <ul className="grid h-[83px] grid-rows-5 font-['DejaVu_Sans_Mono',monospace] text-[8px] leading-4 text-white">
        {signals.map((s) => (
          <li key={s.name} className={"flex items-center pl-px " + (s.sel ? "bg-[#333]" : "")}>{s.value}</li>
        ))}
      </ul>
    </div>
  );
}

const ticks = Array.from({ length: 20 }, (_, i) => i * 10);

const traces: { d: string; c: string }[] = [
  { d: "M0 14H100V1H200", c: "#18a818" },
  { d: "M0 30H100V18H200", c: "#18a818" },
  { d: "M0 47H100V34H200", c: "#18a818" },
  { d: "M30 51H130V64H150V51H200", c: "#18b818" },
  { d: "M0 51H30V64H0z", c: "#c81010" },
  { d: "M10 68H110V80H200", c: "#18b818" },
  { d: "M0 68H10V80H0z", c: "#c81010" },
];

function WavePane() {
  return (
    <section aria-label="Waveforms" className="flex min-w-0 flex-1 flex-col">
      <div className="relative flex min-h-0 flex-1 flex-col border-x border-[#a01010] bg-black">
        <div className="h-[41px] shrink-0" />
        <div className="flex h-[17px] shrink-0 border-b border-[#999]">
          {ticks.map((t) => (
            <div key={t} className="flex min-w-0 flex-1 flex-col justify-between border-l border-[#ddd] pl-px text-[11px] leading-3 text-[#e4e4e4]">
              <span className="whitespace-nowrap">{t === 0 ? "0" : `${t}ns`}</span>
              <div className="-ml-px grid h-0.5 grid-cols-5">
                <i />
                <i className="border-l border-[#ddd]" />
                <i className="border-l border-[#ddd]" />
                <i className="border-l border-[#ddd]" />
                <i className="border-l border-[#ddd]" />
              </div>
            </div>
          ))}
        </div>
        <div className="relative h-[83px] bg-[linear-gradient(#000_50px,#333_50px)]">
          <svg width="100%" height="83" viewBox="0 0 200 83" preserveAspectRatio="none" fill="none" shapeRendering="crispEdges" className="block" role="img" aria-label="Signal traces">
            {traces.map((t) => (
              <path key={t.d} d={t.d} transform="translate(0 .5)" stroke={t.c} strokeWidth="1" vectorEffect="non-scaling-stroke" />
            ))}
          </svg>
        </div>
        <span className="absolute top-3.5 left-0 bg-[#f00] px-px text-[11px] leading-[13px] text-white">Baseline = 0</span>
        <span className="absolute top-7 right-0 bg-[#f00] px-0.5 text-[11px] leading-[13px] text-white">TimeA = 200ns</span>
      </div>
      <div className="relative h-[17px]">
        <HScroll className="h-[14px]" />
        <div className="mx-4 h-px bg-[repeating-linear-gradient(90deg,#222_0_12px,#ddd_12px_13px)]" />
        <Svg w={10} h={7} className="absolute bottom-0 left-3"><path d="M5 .5L9.500 5v1.500h-9V5z" fill="#f4f4f4" stroke="#111" /></Svg>
        <Svg w={10} h={7} className="absolute right-3 bottom-0"><path d="M5 .5L9.500 5v1.500h-9V5z" fill="#f4f4f4" stroke="#111" /></Svg>
      </div>
    </section>
  );
}

function Workspace() {
  return (
    <main className="flex min-h-0 flex-1 border-t-2 border-white">
      <SideTabs />
      <div className="ml-1 flex w-[213px] shrink-0 flex-col">
        <div className="flex h-[41px] shrink-0 flex-col justify-center pb-px text-[9px] leading-3">
          <div className="flex items-center">
            <button aria-label="Baseline settings"><Svg w={12} h={12}><rect x=".5" y=".5" width="11" height="11" fill="#f3f3f3" stroke="#999" /><circle cx="6" cy="5" r="3.300" fill="#d6e0f4" stroke="#5a74b0" /><circle cx="6" cy="5" r="1.300" fill="#c33" /><path d="M8.500 8l3 3" stroke="#555" strokeWidth="1.300" /></Svg></button>
            <span className="flex w-[73px] items-center justify-end whitespace-nowrap">Baseline<Caret /></span>
            = 0
          </div>
          <div className="flex items-center">
            <button aria-label="Cursor settings"><Svg w={12} h={12}><rect x=".5" y=".5" width="11" height="11" fill="#f3f3f3" stroke="#999" /><path d="M2.500 10V2.500h2V5h-2M8.500 10V2.500h2V5h-2" stroke="#c22" /></Svg></button>
            <span className="flex items-center pl-0.5 whitespace-nowrap">Cursor-Baseline<Caret />= 200ns</span>
          </div>
        </div>
        <div className="flex min-h-0 flex-1 gap-1.5">
          <div className="flex w-[145px] flex-col">
            <Names />
            <HScroll className="h-4" />
          </div>
          <div className="flex w-[62px] flex-col">
            <Values />
            <div className="flex h-4">
              <HScroll className="h-4 w-[47px]" />
              <button aria-label="Align values" className="flex flex-1 items-center justify-center">
                <Svg w={11} h={11}><path d="M1.500 0v11" stroke="#111" /><path d="M3 1.500h5M3 4.500h7M3 7h8M3 9.500h4" stroke="#444" strokeWidth="1.200" /></Svg>
              </button>
            </div>
          </div>
        </div>
        <div className="h-px" />
      </div>
      <div className="w-[5px] shrink-0" />
      <WavePane />
      <div className="flex w-[11px] shrink-0 flex-col items-center pt-[58px] pb-5">
        <div className="flex w-full flex-1 flex-col items-center border-l-2 border-[#8a8a8a] bg-[#b4b4b4]">
          <ArrowBtn dir="up" />
          <div className="w-full flex-1 border border-t-white border-r-[#777] border-b-[#777] border-l-white bg-[#e8e8e8]" />
          <ArrowBtn dir="down" />
        </div>
      </div>
    </main>
  );
}

function StatusBar() {
  return (
    <footer className="shrink-0 border-t border-[#a0a0a0]">
      <div className="mt-0.5 flex h-[21px] items-stretch border-t border-b-2 border-t-[#a0a0a0] border-b-[#9a9a9a]">
        <button aria-label="Target" className="flex w-5 items-center justify-center border-r border-[#999]">
          <Svg w={13} h={13}><circle cx="6" cy="7" r="5.500" fill="#c9574c" stroke="#7e2a22" /><circle cx="6" cy="7" r="3.300" fill="#f2dcd8" /><circle cx="6" cy="7" r="1.500" fill="#a02018" /><path d="M6 7l6-6" stroke="#555" strokeWidth="1.200" /></Svg>
        </button>
        <button aria-label="Links" className="flex w-[18px] items-center justify-center border-r border-[#999]">
          <Svg w={13} h={13}><rect x="1" y="1" width="4.500" height="4" rx="1" stroke="#777" strokeWidth="1.300" /><rect x="1" y="8" width="4.500" height="4" rx="1" stroke="#777" strokeWidth="1.300" /><path d="M4 5v2h8M9 3v8M10 5l2.500 2L10 9" stroke="#4e6599" /></Svg>
        </button>
        <button aria-label="Save" className="flex w-[17px] items-center justify-center border-r border-[#999]">
          <Svg w={14} h={14}><Disk y={1} x={.5} /></Svg>
        </button>
        <span className="ml-auto flex items-center border-l border-[#999] pr-1 pl-[3px] text-[10px] leading-4 whitespace-pre">0   objects selected</span>
      </div>
    </footer>
  );
}

/* ---------- taskbar ---------- */

const apps: { name: string; icon: React.ReactNode; state?: "open" | "active" }[] = [
  { name: "Start", icon: <Svg w={20} h={20}><path d="M0 0h9.500v9.500H0zM10.500 0H20v9.500h-9.500zM0 10.500h9.500V20H0zM10.500 10.500H20V20h-9.500z" fill="#4cc2f5" /><path d="M0 0h9.500v9.500H0z" fill="#7ddcff" /></Svg> },
  { name: "Search", icon: <Svg w={20} h={20}><circle cx="8.500" cy="8.500" r="6.800" fill="#4a4458" stroke="#d6d3dc" strokeWidth="1.800" /><path d="M13.500 13.500L18 18.500" stroke="#d6d3dc" strokeWidth="2.200" /></Svg> },
  { name: "Task view", icon: <Svg w={20} h={18}><path d="M0 6h14v12H0z" fill="#77747c" /><path d="M6 0h14v12H6z" fill="#eeedf0" /><path d="M6 6h8v6H6z" fill="#a9a7ad" /></Svg> },
  { name: "Widgets", icon: <Svg w={20} h={18}><rect width="20" height="18" rx="1" fill="#1c76bd" /><path d="M2 2h7v14H2z" fill="#f1f7fc" /><path d="M11 2h7v8h-7z" fill="#63cbfa" /><path d="M11 11h7v5h-7z" fill="#2c9be0" /></Svg> },
  { name: "Chat", icon: <Svg w={20} h={20}><path d="M1 19V9.500A9.300 9.300 0 1110 19z" fill="#6b67c4" /><rect x="4.500" y="6" width="8" height="7.500" rx="1" fill="#fff" /><path d="M13 9l3-2.500V13l-3-2.500z" fill="#fff" /></Svg> },
  { name: "8086 emulator", icon: <Svg w={19} h={19}><rect width="19" height="19" fill="#f2f2f2" /><rect x="1.500" y="1.500" width="16" height="16" stroke="#111" strokeWidth="2" strokeDasharray="1.500 1" /><rect x="2.500" y="3" width="14" height="13" fill="#1ef01e" stroke="#082" /><path d="M3.500 8h2v3h-2zM3.500 9.500h2M7 8h2v3H7zM10.500 8h2v3h-2zM10.500 9.500h2M15.500 8h-1.500v3h1.500V9.500H14" stroke="#063" strokeWidth=".8" /></Svg> },
  { name: "File Explorer", icon: <Svg w={21} h={19}><path d="M0 1.500Q0 1 1 1h6l2 2.500h11q1 0 1 1V18H0z" fill="#d99b16" /><path d="M0 5h21v12.500H0z" fill="#fccf4f" /><path d="M4 18v-4.500q0-1 1-1h11q1 0 1 1V18z" fill="#1a78c9" /></Svg> },
  { name: "Microsoft Store", icon: <Svg w={20} h={20}><path d="M5.500 6V1.500h9V6" stroke="#2b9fe0" strokeWidth="1.500" /><path d="M0 4.500h20V17q0 2.500-2.500 2.500h-15Q0 19.500 0 17z" fill="#f3f3f5" /><path d="M6 7.500h3.700v3.700H6z" fill="#f25022" /><path d="M10.300 7.500H14v3.700h-3.700z" fill="#7fba00" /><path d="M6 11.800h3.700v3.700H6z" fill="#00a4ef" /><path d="M10.300 11.800H14v3.700h-3.700z" fill="#ffb900" /></Svg> },
  { name: "Brave", icon: <Svg w={18} h={20}><path d="M5 0h8l2 2 2 .5.7 4-2.200 9L9 20l-6.500-4.500L.3 6.500l.7-4L3 2z" fill="#f4431c" /><path d="M4 5l5-1.500L14 5l1 3-3 5 .5 2L9 17.500 5.500 15l.5-2-3-5z" fill="#fff" /><path d="M5 7l3 1.500M13 7l-3 1.500M9 9v3.500M7 13.500l2 1.500 2-1.500" stroke="#f4431c" strokeWidth="1.200" /></Svg> },
  { name: "Edge", icon: <Svg w={20} h={20}><circle cx="10" cy="10" r="9.700" fill="#1778c8" /><path d="M.5 9C2 1.500 10-.5 15 2.500c5 3 5.500 8 3 10.500-2 1.500-5.500 1-5.500-.5s1.500-2 0-4.500C10 4.500 4 4.500.5 9z" fill="#46cfa6" /><path d="M.5 9C2 1.500 9.500-.3 13 1.500 8 1.500 5 4.500 3.500 7z" fill="#27b0e0" /><path d="M8 8c-3 5 1 11 8.500 9-3 3.500-9 3.500-12 0S3 9 8 8z" fill="#114a8b" /><path d="M12.500 8.500c-2.500-.8-4 .8-3.500 3 .8 2.300 4 3 7.500 2-2.500 0-4-.8-4-2s.7-2 0-3z" fill="#251c35" /></Svg> },
  { name: "Word", icon: <Svg w={21} h={19}><path d="M6 1h15v17H6z" fill="#2b7cd3" /><path d="M6 1h15v4.500H6z" fill="#41a5ee" /><path d="M6 14h15v4H6z" fill="#103f91" /><path d="M0 4.500h11v10H0z" fill="#185abd" /><path d="M2.500 7l1.500 5 1.500-4.500L7 12l1.500-5" stroke="#fff" strokeWidth="1.200" /></Svg> },
  { name: "Chrome", icon: <Svg w={20} h={20}><circle cx="10" cy="10" r="10" fill="#fbc116" /><path d="M10 10L1.340 5A10 10 0 0118.660 5z" fill="#e33b2e" /><path d="M10 10L1.340 5A10 10 0 0010 20l4.300-7.500z" fill="#2da94f" /><path d="M10 10V5h8.660A10 10 0 0110 20l4.300-7.500z" fill="#fbc116" /><circle cx="10" cy="10" r="5" fill="#fff" /><circle cx="10" cy="10" r="3.900" fill="#3b7de8" /></Svg> },
  { name: "MobaXterm", state: "open", icon: <Svg w={21} h={20}><rect x=".7" y="1.700" width="19.500" height="13.500" fill="#2c2f33" stroke="#c9ccd0" strokeWidth="1.400" /><path d="M3 4.500l2.500 1.500L3 7.500M6.500 8h3" stroke="#fff" /><path d="M6 11l4-3 3.500 4.500-2.500 4z" fill="#e8402c" /><path d="M10 8l4-2 4 1-1 5-3.500 1z" fill="#4e8be8" /><path d="M11 16l6-4 3 2-5 5z" fill="#a8d820" /></Svg> },
  { name: "Design Browser", state: "open", icon: <Svg w={20} h={20}><path d="M4 4v12h6" stroke="#9a9aa2" /><rect x="1" y="1" width="5" height="3.500" fill="#dcdce2" /><rect x="8" y="14" width="3.500" height="3.500" fill="#dcdce2" /><path d="M13 12l5 5" stroke="#b8742a" strokeWidth="2.600" /><circle cx="10" cy="8.500" r="4.500" fill="#dfe6f2" stroke="#8c93a5" strokeWidth="1.300" /><circle cx="10" cy="8.500" r="2" fill="#a9b5cd" /></Svg> },
  { name: "Console", state: "open", icon: <Svg w={17} h={15}><rect x=".7" y=".7" width="15.500" height="13.500" fill="#5d6660" stroke="#b6bab8" strokeWidth="1.400" /><path d="M1 2.500h15" stroke="#c4c7c5" strokeWidth="1.500" /><path d="M4 6l3 2-3 2M8.500 10.500H12" stroke="#79d182" /></Svg> },
  { name: "SimVision", state: "active", icon: <Waves /> },
];

function Taskbar() {
  return (
    <nav aria-label="Taskbar" className="flex h-10 shrink-0 items-center bg-[linear-gradient(90deg,#251c35_0%,#261b36_24%,#371a31_34%,#3a1b25_46%,#42181b_60%,#45170f_84%,#3a1814_92%,#321b1e_100%)] pr-4 pl-[9px] font-['Open_Sans','Noto_Sans',sans-serif] text-[#f0eaec]">
      <ul className="grid h-full w-[587px] shrink-0 grid-cols-16">
        {apps.map((a) => (
          <li key={a.name} className="flex items-center justify-center">
            <button
              aria-label={a.name}
              className={"relative flex h-[34px] w-8 items-center justify-center rounded " + (a.state === "active" ? "bg-white/10" : "")}
            >
              {a.icon}
              {a.state === "open" && <i className="absolute bottom-px h-0.5 w-[5px] rounded-full bg-[#a59ca8]" />}
              {a.state === "active" && <i className="absolute bottom-px h-0.5 w-3.5 rounded-full bg-[#d79be0]" />}
            </button>
          </li>
        ))}
      </ul>
      <div className="ml-auto flex items-center text-[10px] leading-[13px]">
        <button aria-label="Hidden icons"><Svg w={11} h={7}><path d="M1 6l4.500-4.500L10 6" stroke="#eee" strokeWidth="1.200" /></Svg></button>
        <button aria-label="Cloud sync" className="ml-[7px]"><Svg w={14} h={12}><path d="M2 10a3 3 0 01.5-5A4.500 4.500 0 0111 4q2 .5 2 3v3z" fill="#d8d5d5" /><circle cx="10" cy="8" r="3.700" fill="#8d8a8c" /><path d="M9 6.500v3M11 6.500v3" stroke="#fff" /></Svg></button>
        <button className="ml-2.5 text-center">ENG<br />IN</button>
        <button aria-label="Network" className="ml-[15px]"><Svg w={14} h={14}><path d="M9 1.500H1v9h10V7M3 13.500h6M6 10.500v3" stroke="#eee" /><path d="M9.500 1h4v4h-4zM11.500 5v8" stroke="#eee" /></Svg></button>
        <button aria-label="Muted" className="ml-1.5"><Svg w={13} h={12}><path d="M1 4.500h2L6 1.500v9l-3-3H1z" stroke="#eee" /><path d="M8.500 4l4 4M12.500 4l-4 4" stroke="#eee" /></Svg></button>
        <button className="ml-3 text-right">17:24<br />21-10-2025</button>
        <button aria-label="5 notifications" className="ml-[9px] flex size-[13px] items-center justify-center rounded-full bg-[#d79be0] text-[9px] text-[#2b1430]">5</button>
      </div>
    </nav>
  );
}

export default function App() {
  return (
    <div className="flex h-screen min-h-[480px] flex-col overflow-hidden bg-[#e8e8e8] font-['Liberation_Sans',Arial,sans-serif] text-black">
      <TitleBar />
      <MenuBar />
      <MainTools />
      <SearchTools />
      <TimeTools />
      <Workspace />
      <StatusBar />
      <Taskbar />
    </div>
  );
}
